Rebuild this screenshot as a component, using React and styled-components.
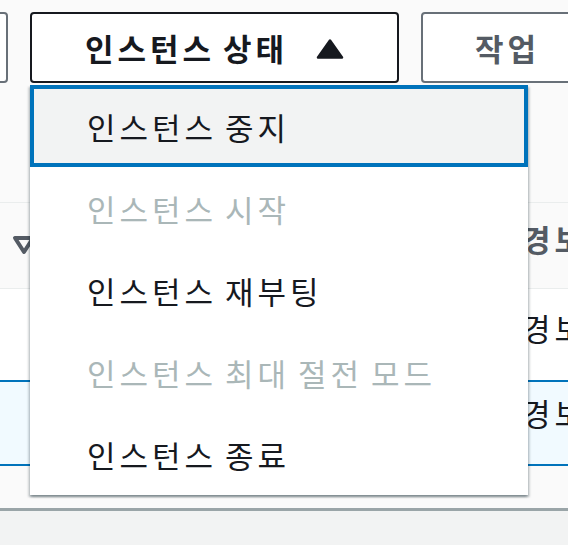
import React from "react";
import styled, { createGlobalStyle } from "styled-components";

const Global = createGlobalStyle`
  html, body {
    margin: 0;
    padding: 0;
    overflow: hidden;
    background: #f2f3f3;
    font-family: "Noto Sans CJK KR", "Noto Sans", sans-serif;
  }
`;

const Panel = styled.div`
  position: relative;
  background: #fafafa;
  height: 508px;
  border-bottom: 3px solid #9aa5a8;
  box-shadow: 0 1px 1px rgba(0, 28, 36, 0.2);
  display: flex;
  flex-direction: column;
`;

const Toolbar = styled.div`
  display: flex;
  gap: 22px;
  padding-top: 12px;
  height: 71px;
`;

const Button = styled.button`
  flex-shrink: 0;
  box-sizing: border-box;
  height: 71px;
  width: ${(p) => p.$w}px;
  margin-left: ${(p) => p.$ml || 0}px;
  border: 2px solid ${(p) => (p.$active ? "#16191f" : "#687078")};
  border-radius: 4px;
  background: #fff;
  color: ${(p) => (p.$active ? "#16191f" : "#545b64")};
  font-family: inherit;
  font-weight: 700;
  font-size: 31px;
  letter-spacing: 4px;
  word-spacing: -3px;
  display: flex;
  align-items: center;
  justify-content: center;
  gap: 28px;
  padding: 0;
`;

const Anchor = styled.div`
  position: relative;
  flex-shrink: 0;
`;

const Menu = styled.ul`
  position: absolute;
  z-index: 10;
  top: 73px;
  left: 0;
  width: 498px;
  margin: 0;
  padding: 0;
  list-style: none;
  background: #fff;
  box-shadow: 0 2px 2px 0 rgba(0, 28, 36, 0.3), 2px 2px 2px 0 rgba(0, 28, 36, 0.15),
    -2px 2px 2px 0 rgba(0, 28, 36, 0.15);
`;

const Item = styled.li`
  box-sizing: border-box;
  height: 82px;
  display: flex;
  align-items: center;
  padding-left: 53px;
  border: 4px solid ${(p) => (p.$focused ? "#0073bb" : "transparent")};
  background: ${(p) => (p.$focused ? "#f2f3f3" : "#fff")};
  color: ${(p) => (p.$disabled ? "#aab7b8" : "#16191f")};
  font-size: 31px;
  letter-spacing: 4px;
  word-spacing: -3px;
`;

const Table = styled.div`
  margin-top: 119px;
  display: flex;
  flex-direction: column;
`;

const HeaderRow = styled.div`
  box-sizing: border-box;
  height: 87px;
  border-top: 1px solid #eaeded;
  border-bottom: 1px solid #eaeded;
  background: #fafafa;
  display: flex;
  align-items: center;
  padding-bottom: 14px;
`;

const Row = styled.div`
  box-sizing: border-box;
  height: ${(p) => (p.$selected ? 86 : 91)}px;
  border-top: ${(p) => (p.$selected ? "2px solid #0073bb" : "none")};
  border-bottom: ${(p) => (p.$selected ? "2px solid #0073bb" : "none")};
  background: ${(p) => (p.$selected ? "#f1faff" : "#fff")};
  display: flex;
  align-items: center;
  padding-bottom: ${(p) => (p.$selected ? 22 : 14)}px;
`;

const SortIcon = styled.svg`
  flex-shrink: 0;
  margin-left: 12px;
  width: 24px;
  height: 20px;
  margin-top: 12px;
`;

const Cell = styled.span`
  margin-left: ${(p) => p.$ml}px;
  font-size: 31px;
  letter-spacing: 4px;
  white-space: nowrap;
  font-weight: ${(p) => (p.$head ? 700 : 400)};
  color: ${(p) => (p.$head ? "#545b64" : "#16191f")};
`;

const Caret = styled.svg`
  width: 28px;
  height: 22px;
  margin-top: 2px;
`;

const items = [
  { label: "인스턴스 중지", focused: true },
  { label: "인스턴스 시작", disabled: true },
  { label: "인스턴스 재부팅" },
  { label: "인스턴스 최대 절전 모드", disabled: true },
  { label: "인스턴스 종료" },
];

export default function App() {
  return (
    <>
      <Global />
      <Panel>
        <Toolbar>
          <Button $w={80} $ml={-72} />
          <Anchor>
            <Button $w={369} $active>
              <span>인스턴스 상태</span>
              <Caret viewBox="0 0 28 22">
                <path d="M14 2.5 L26 19.5 L2 19.5 Z" fill="#16191f" stroke="#16191f" strokeWidth="2.5" strokeLinejoin="round" />
              </Caret>
            </Button>
            <Menu>
              {items.map((it) => (
                <Item key={it.label} $focused={it.focused} $disabled={it.disabled}>
                  {it.label}
                </Item>
              ))}
            </Menu>
          </Anchor>
          <Button $w={173}>작업</Button>
        </Toolbar>
        <Table>
          <HeaderRow>
            <SortIcon viewBox="0 0 24 20">
              <path d="M3 3 L21 3 L12 17 Z" fill="none" stroke="#545b64" strokeWidth="4" strokeLinejoin="round" />
            </SortIcon>
            <Cell $head $ml={486}>경보</Cell>
          </HeaderRow>
          <Row>
            <Cell $ml={522}>경보</Cell>
          </Row>
          <Row $selected>
            <Cell $ml={522}>경보</Cell>
          </Row>
        </Table>
      </Panel>
    </>
  );
}
